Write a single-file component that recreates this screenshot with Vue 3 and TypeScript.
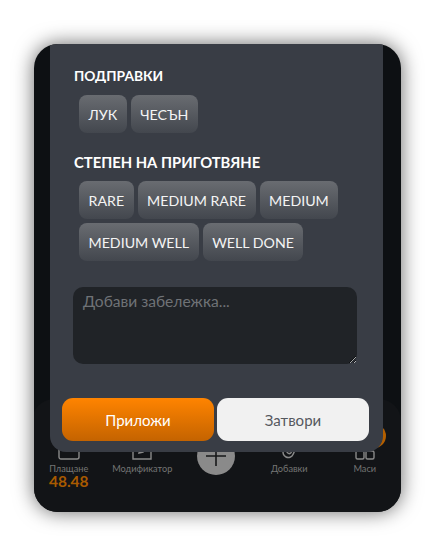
<script setup lang="ts">
const spices: string[] = ['ЛУК', 'ЧЕСЪН']
const doneness: string[] = ['RARE', 'MEDIUM RARE', 'MEDIUM', 'MEDIUM WELL', 'WELL DONE']
</script>

<template>
  <div class="page">
    <div class="phone">
      <div class="spacer"></div>
      <nav class="nav">
        <span class="orange-dot"></span>
        <div class="nav-item">
          <svg class="ico" width="22" height="22" viewBox="0 0 22 22" fill="none" stroke="#8a8a8a" stroke-width="1.4">
            <rect x="1" y="1" width="20" height="20" rx="2" />
            <path d="M1 8h20" />
          </svg>
          <span class="lbl">Плащане</span>
          <span class="total">48.48</span>
        </div>
        <div class="nav-item">
          <svg class="ico" width="22" height="22" viewBox="0 0 22 22" fill="none" stroke="#8a8a8a" stroke-width="1.4">
            <path d="M20 10v11H2V3h11" />
            <path d="M8 15l1-4L18 2l3 3-9 9z" fill="#8a8a8a" />
          </svg>
          <span class="lbl">Модификатор</span>
        </div>
        <div class="nav-item plus-wrap">
          <button class="plus" type="button">
            <svg width="20" height="20" viewBox="0 0 20 20" stroke="#161718" stroke-width="1.6">
              <path d="M0 10h20M10 0v20" />
            </svg>
          </button>
        </div>
        <div class="nav-item">
          <svg class="ico" width="22" height="22" viewBox="0 0 22 22" fill="none" stroke="#8a8a8a" stroke-width="1.5">
            <path d="M14 1l-5 12a2.2 2.2 0 0 0 4 1.6L17 5" />
            <path d="M10 1L5.500 12a5 5 0 0 0 9.500 4.500L19 8" />
          </svg>
          <span class="lbl">Добавки</span>
        </div>
        <div class="nav-item last">
          <svg class="ico" width="22" height="22" viewBox="0 0 22 22" fill="none" stroke="#8a8a8a" stroke-width="1.4">
            <rect x="2" y="2" width="8" height="8" rx="1.5" />
            <rect x="12" y="2" width="8" height="8" rx="1.5" />
            <rect x="2" y="13" width="8" height="8" rx="1.5" />
            <rect x="12" y="13" width="8" height="8" rx="1.5" />
          </svg>
          <span class="lbl">Маси</span>
        </div>
      </nav>

      <section class="modal">
        <h3 class="title">ПОДПРАВКИ</h3>
        <div class="chips">
          <button v-for="s in spices" :key="s" class="chip" type="button">{{ s }}</button>
        </div>
        <h3 class="title second">СТЕПЕН НА ПРИГОТВЯНЕ</h3>
        <div class="chips">
          <button v-for="d in doneness" :key="d" class="chip" type="button">{{ d }}</button>
        </div>
        <textarea class="note" placeholder="Добави забележка..."></textarea>
        <div class="actions">
          <button class="btn apply" type="button">Приложи</button>
          <button class="btn close" type="button">Затвори</button>
        </div>
      </section>
    </div>
  </div>
</template>

<style>
html, body { margin: 0; background: #fff; }
</style>

<style scoped>
.page {
  width: 435px;
  height: 556px;
  box-sizing: border-box;
  padding: 44px 34px;
  font-family: Lato, "Noto Sans", sans-serif;
  overflow: hidden;
}
.phone {
  position: relative;
  width: 367px;
  height: 468px;
  border-radius: 24px;
  background: #0d1013;
  box-shadow: 0 0 20px rgba(0, 0, 0, 0.6);
  overflow: hidden;
  display: flex;
  flex-direction: column;
}
.spacer { flex: 1; }
.nav {
  position: relative;
  height: 113px;
  border-radius: 22px 22px 0 0;
  background: #121417;
  display: grid;
  grid-template-columns: repeat(5, 73.5px);
  margin-left: -2px;
}
.orange-dot {
  position: absolute;
  right: 15px;
  top: 25px;
  width: 24px;
  height: 24px;
  border-radius: 50%;
  background: #b35f00;
}
.nav-item {
  display: flex;
  flex-direction: column;
  align-items: center;
  padding-top: 39px;
}
.last { padding-left: 4px; }
.lbl { margin-top: 3px; font-size: 9.2px; line-height: 11px; color: #747474; white-space: nowrap; }
.total { font-size: 15.5px; line-height: 14px; font-weight: 700; color: #a85a00; }
.plus-wrap { padding-top: 38px; }
.plus {
  width: 38px;
  height: 38px;
  border: none;
  border-radius: 50%;
  background: #8a8a8a;
  padding: 0;
  display: flex;
  align-items: center;
  justify-content: center;
}
.modal {
  position: absolute;
  left: 16px;
  top: 0;
  width: 333px;
  height: 408px;
  box-sizing: border-box;
  padding: 24px 12px 11px;
  border-radius: 0 0 16px 16px;
  background: #393d45;
  display: flex;
  flex-direction: column;
}
.title {
  margin: 0 0 0 12px;
  font-size: 13.8px;
  line-height: 16px;
  font-weight: 700;
  color: #fff;
}
.second { margin-top: 21px; font-size: 14.8px; }
.chips {
  display: flex;
  flex-wrap: wrap;
  gap: 4px;
  margin: 3px 0 0 17px;
  padding-top: 8px;
  width: 290px;
}
.chip {
  height: 38px;
  padding: 0 9.5px;
  border: none;
  border-radius: 8px;
  background: linear-gradient(#696c71, #43474e);
  color: #f4f4f4;
  font-family: inherit;
  font-size: 14.2px;
  white-space: nowrap;
}
.note {
  display: block;
  box-sizing: border-box;
  width: 284px;
  height: 77px;
  margin: 26px 0 0 11px;
  padding: 5px 10px;
  border: none;
  border-radius: 10px;
  background: #202327;
  color: #fff;
  font-family: inherit;
  font-size: 15.6px;
  outline: none;
}
.note::placeholder { color: #6f7276; }
.actions {
  display: flex;
  gap: 3px;
  margin-top: auto;
}
.btn {
  width: 152px;
  height: 43px;
  border-radius: 11px;
  font-family: inherit;
  font-size: 15px;
}
.apply {
  border: none;
  background: linear-gradient(#ff8400, #c46300);
  color: #fff;
}
.close {
  border: none;
  background: #f1f1f1;
  color: #55585e;
}
</style>
